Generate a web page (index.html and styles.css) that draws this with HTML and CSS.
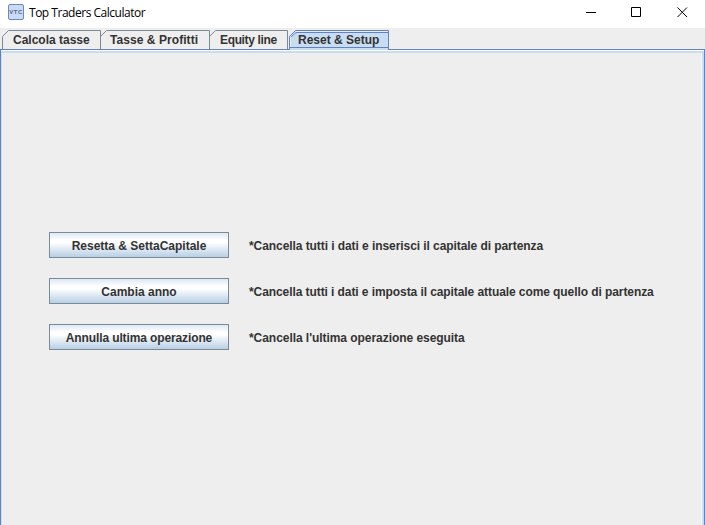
FILE: index.html
```html
<!DOCTYPE html>
<html lang="it">
<head>
<meta charset="utf-8">
<title>Top Traders Calculator</title>
<link rel="stylesheet" href="styles.css">
</head>
<body>
<div class="window">
  <header class="titlebar">
    <span class="app-icon">VTC</span>
    <h1 class="title">Top Traders Calculator</h1>
    <div class="controls">
      <svg width="46" height="24" viewBox="0 0 46 24"><path d="M18 12.5h10"/></svg>
      <svg width="45" height="24" viewBox="0 0 45 24"><path d="M17.500 7.5h9v9h-9z"/></svg>
      <svg width="46" height="24" viewBox="0 0 46 24"><path d="M18.5 7.5l9.5 9.5M28 7.5l-9.5 9.5"/></svg>
    </div>
  </header>
  <nav class="tabs">
    <div class="tab t1"><svg width="99" height="19"><path d="M.5 19V6.500L6.500.5H98.500V19"/></svg><span>Calcola tasse</span></div>
    <div class="tab t2"><svg width="109" height="19"><path d="M0 6L5.500.5H108.500V19"/></svg><span>Tasse &amp; Profitti</span></div>
    <div class="tab t3"><svg width="78" height="19"><path d="M0 6L5.500.5H77.500V19"/></svg><span>Equity line</span></div>
    <div class="tab t4 selected"><svg width="100" height="20"><path class="fill" d="M.5 20V6.500L6.500.5H99.500V20"/><path class="shine" d="M1.500 17V7L7 1.500H99"/><path class="inner" d="M2 7L7 2.500H99M0 17.500H99"/></svg><span>Reset &amp; Setup</span></div>
  </nav>
  <main class="panel">
    <div class="row"><button class="b1"><span>Resetta &amp; SettaCapitale</span></button><p class="d1">*Cancella tutti i dati e inserisci il capitale di partenza</p></div>
    <div class="row"><button class="b2"><span>Cambia anno</span></button><p class="d2">*Cancella tutti i dati e imposta il capitale attuale come quello di partenza</p></div>
    <div class="row"><button class="b3"><span>Annulla ultima operazione</span></button><p class="d3">*Cancella l'ultima operazione eseguita</p></div>
  </main>
</div>
</body>
</html>
```
FILE: styles.css
```css
* { box-sizing: border-box; }
body { margin: 0; overflow: hidden; background: #eee; }
.window { width: 705px; height: 525px; display: flex; flex-direction: column; font: bold 12px/16px "Liberation Sans", Arial, sans-serif; color: #333; }
.titlebar { height: 28px; flex: none; display: flex; align-items: flex-start; background: #fff; color: #000; }
.app-icon { width: 16px; height: 16px; margin: 4px 5px 0 8px; border: 1px solid #7588b5; border-radius: 2px; background: #c8dcf7; color: #5a628c; font-size: 6px; line-height: 14px; letter-spacing: .5px; text-align: center; }
.title { margin: 4px 0 0; font: 12px/17px "Open Sans", "Noto Sans", sans-serif; letter-spacing: -.48px; }
.controls { display: flex; margin-left: auto; }
.controls path { fill: none; stroke: #000; stroke-width: 1; }
.tabs { height: 21px; flex: none; display: flex; padding: 2px 0 0 2px; }
.tab { position: relative; height: 19px; }
.tab svg { position: absolute; left: 0; top: 0; }
.tab path { fill: none; stroke: #7a8a99; }
.tab .fill { fill: #c8ddf2; stroke: #6382bf; }
.tab .shine { stroke: #e4effa; }
.tab .inner { stroke: #6382bf; }
.tab span { position: relative; display: block; top: 2px; white-space: nowrap; }
.t1 { width: 99px; padding-left: 11px; }
.t2 { width: 109px; padding-left: 9px; letter-spacing: .06px; }
.t3 { width: 78px; padding-left: 10px; letter-spacing: -.35px; }
.t4 { width: 100px; margin-left: 1px; padding-left: 9px; }
.panel { flex: 1; border: solid #6382bf; border-width: 1px 1px 0; box-shadow: inset 0 1px #fff, inset 0 3px #c8ddf2, inset 1px 0 #c8ddf2, inset -2px 0 #c8ddf2, inset -3px 0 #f8fafc; padding: 182px 0 0 48px; display: flex; flex-direction: column; gap: 20px; }
.row { display: flex; align-items: center; gap: 20px; height: 26px; }
button { width: 180px; height: 26px; padding: 2px 0 0; border: 1px solid #7a8a99; background: linear-gradient(#dde8f3 0%, #fff 30%, #fff 40%, #b8cfe5 100%); font: inherit; color: inherit; }
.row p { margin: 2px 0 0; white-space: nowrap; }
.b3 { letter-spacing: -.12px; }
.d1 { letter-spacing: -.07px; }
.d2 { letter-spacing: -.08px; }
.d3 { letter-spacing: -.05px; }
.selected { z-index: 1; }
```
